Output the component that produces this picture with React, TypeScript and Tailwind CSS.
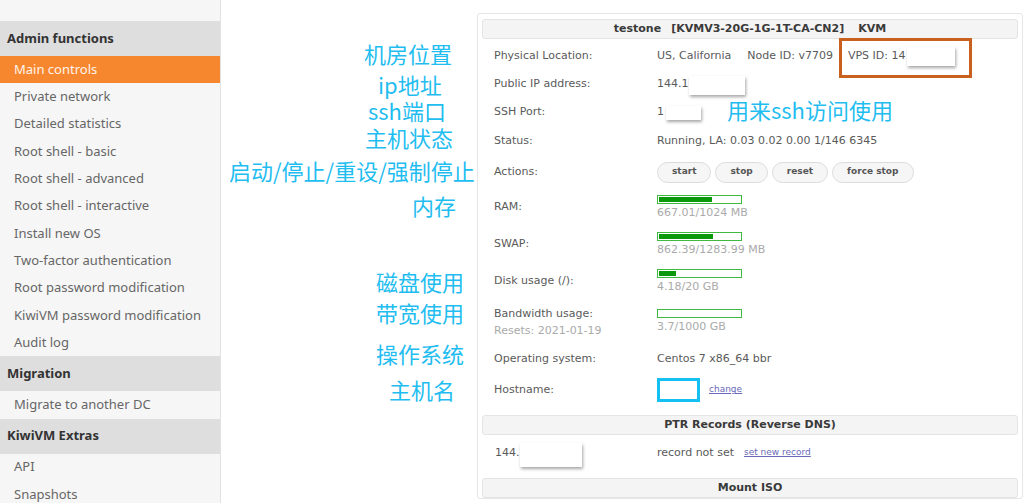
import type { ReactNode } from 'react';

const sans = "font-['Noto_Sans',sans-serif]";
const panel = "font-['DejaVu_Sans',Verdana,sans-serif]";
const cjk = "font-['Noto_Sans_CJK_SC',sans-serif]";

const adminItems = [
  'Main controls',
  'Private network',
  'Detailed statistics',
  'Root shell - basic',
  'Root shell - advanced',
  'Root shell - interactive',
  'Install new OS',
  'Two-factor authentication',
  'Root password modification',
  'KiwiVM password modification',
  'Audit log',
];

function SideHeader({ children }: { children: ReactNode }) {
  return (
    <div className="flex h-[35px] items-center bg-[#dedede] pl-[7px] text-[13px] font-bold text-[#333]">
      {children}
    </div>
  );
}

function SideItem({ label, active }: { label: string; active?: boolean }) {
  return (
    <div
      className={
        active
          ? 'flex h-[27.3px] items-center bg-[#f7872e] pl-[14px] text-[13px] text-[#fff3ea]'
          : 'flex h-[27.3px] items-center pl-[14px] text-[13px] text-[#666]'
      }
    >
      {label}
    </div>
  );
}

function Sidebar() {
  return (
    <aside className={`h-full w-[221px] shrink-0 border-r border-[#e2e2e2] bg-[#f6f6f6] ${sans}`}>
      <div className="h-[21px]" />
      <SideHeader>Admin functions</SideHeader>
      {adminItems.map((item, i) => (
        <SideItem key={item} label={item} active={i === 0} />
      ))}
      <SideHeader>Migration</SideHeader>
      <SideItem label="Migrate to another DC" />
      <SideHeader>KiwiVM Extras</SideHeader>
      <SideItem label="API" />
      <SideItem label="Snapshots" />
    </aside>
  );
}

function Mask({ className }: { className: string }) {
  return (
    <span
      className={`inline-block bg-white shadow-[1px_2px_3px_rgba(0,0,0,0.35)] ${className}`}
    />
  );
}

function Bar({ pct, text }: { pct: number; text: string }) {
  return (
    <div className="flex flex-col">
      <div className="h-[9px] w-[85px] border border-[#3fb93f] bg-white p-px">
        <div className="h-full bg-[#0a990a]" style={{ width: `${pct}%` }} />
      </div>
      <div className="mt-[2px] h-[14px] leading-[14px] text-[#aaa]">{text}</div>
    </div>
  );
}

function Row({
  h,
  label,
  children,
}: {
  h: string;
  label: ReactNode;
  children?: ReactNode;
}) {
  return (
    <div className={`flex items-center pl-[12px] ${h}`}>
      <div className="w-[163px] shrink-0">{label}</div>
      <div className="flex items-center">{children}</div>
    </div>
  );
}

function SectionHead({ children }: { children: ReactNode }) {
  return (
    <div className="flex h-[20px] items-center justify-center rounded-[3px] border border-[#e4e4e4] bg-[#f4f4f4] text-[11px] font-bold text-[#3a3a3a]">
      {children}
    </div>
  );
}

function Btn({ children }: { children: ReactNode }) {
  return (
    <span className="flex h-[21px] items-center rounded-full border border-[#dcdcdc] bg-[#f6f6f6] px-[14px] text-[9px] font-bold text-[#555]">
      {children}
    </span>
  );
}

function Card() {
  return (
    <div
      className={`w-[546px] rounded-[3px] border border-[#e6e6e6] px-[4px] pt-[5px] text-[11px] text-[#5a5a5a] ${panel}`}
    >
      <SectionHead>
        <span>testone</span>
        <span className="ml-[10px]">[KVMV3-20G-1G-1T-CA-CN2]</span>
        <span className="ml-[14px]">KVM</span>
      </SectionHead>
      <div className="h-[3px]" />
      <Row h="h-[28px]" label="Physical Location:">
        <span>US, California</span>
        <span className="ml-[16px]">Node ID: v7709</span>
        <span className="ml-[15px]">VPS ID: 14</span>
        <Mask className="ml-[2px] h-[19px] w-[48px]" />
      </Row>
      <Row h="h-[28px]" label="Public IP address:">
        <span>144.1</span>
        <Mask className="mt-[3px] h-[19px] w-[56px]" />
      </Row>
      <Row h="h-[28px]" label="SSH Port:">
        <span>1</span>
        <Mask className="ml-[2px] mt-[2px] h-[14px] w-[35px]" />
      </Row>
      <Row h="h-[30px]" label="Status:">
        <span>Running, LA: 0.03 0.02 0.00 1/146 6345</span>
      </Row>
      <Row h="h-[32px]" label="Actions:">
        <div className="flex gap-[4px]">
          <Btn>start</Btn>
          <Btn>stop</Btn>
          <Btn>reset</Btn>
          <Btn>force stop</Btn>
        </div>
      </Row>
      <Row h="h-[38px]" label="RAM:">
        <Bar pct={65} text="667.01/1024 MB" />
      </Row>
      <Row h="h-[36px]" label="SWAP:">
        <Bar pct={67} text="862.39/1283.99 MB" />
      </Row>
      <Row h="h-[38px]" label="Disk usage (/):">
        <Bar pct={21} text="4.18/20 GB" />
      </Row>
      <Row
        h="h-[43px]"
        label={
          <div className="leading-[17px]">
            <div>Bandwidth usage:</div>
            <div className="text-[#aaa]">Resets: 2021-01-19</div>
          </div>
        }
      >
        <Bar pct={0} text="3.7/1000 GB" />
      </Row>
      <Row h="h-[32px]" label="Operating system:">
        <span>Centos 7 x86_64 bbr</span>
      </Row>
      <Row h="h-[30px]" label="Hostname:">
        <span className="h-[24px] w-[43px] border-[3px] border-[#14bff2] bg-white" />
        <span className="ml-[9px] text-[9px] text-[#6a6ab8] underline">change</span>
      </Row>
      <div className="h-[10px]" />
      <SectionHead>PTR Records (Reverse DNS)</SectionHead>
      <div className="flex h-[36px] items-center pl-[13px]">
        <div className="flex w-[162px] shrink-0 items-center">
          <span>144.</span>
          <Mask className="mt-[3px] h-[24px] w-[62px]" />
        </div>
        <span>record not set</span>
        <span className="ml-[10px] text-[9px] text-[#6a6ab8] underline">set new record</span>
      </div>
      <div className="h-[7px]" />
      <SectionHead>Mount ISO</SectionHead>
    </div>
  );
}

const notes: { text: string; cls: string }[] = [
  { text: '机房位置', cls: 'left-[364px] top-[43px]' },
  { text: 'ip地址', cls: 'left-[378px] top-[74px]' },
  { text: 'ssh端口', cls: 'left-[368px] top-[100px]' },
  { text: '主机状态', cls: 'left-[365px] top-[127px]' },
  { text: '启动/停止/重设/强制停止', cls: 'left-[229px] top-[160px]' },
  { text: '内存', cls: 'left-[412px] top-[195px]' },
  { text: '磁盘使用', cls: 'left-[376px] top-[271px]' },
  { text: '带宽使用', cls: 'left-[376px] top-[302px]' },
  { text: '操作系统', cls: 'left-[376px] top-[343px]' },
  { text: '主机名', cls: 'left-[389px] top-[379px]' },
  { text: '用来ssh访问使用', cls: 'left-[727px] top-[99px]' },
];

export default function App() {
  return (
    <div className="relative flex h-[503px] w-[1024px] overflow-hidden bg-white">
      <Sidebar />
      <main className="flex-1 pl-[256px] pt-[13px]">
        <Card />
      </main>
      {notes.map((n) => (
        <div
          key={n.text}
          className={`absolute h-[20px] whitespace-nowrap text-[22px] leading-[20px] text-[#1fbdf0] ${cjk} ${n.cls}`}
        >
          {n.text}
        </div>
      ))}
      <div className="absolute left-[839px] top-[38px] h-[40px] w-[133px] border-[3px] border-[#c9601d]" />
    </div>
  );
}
